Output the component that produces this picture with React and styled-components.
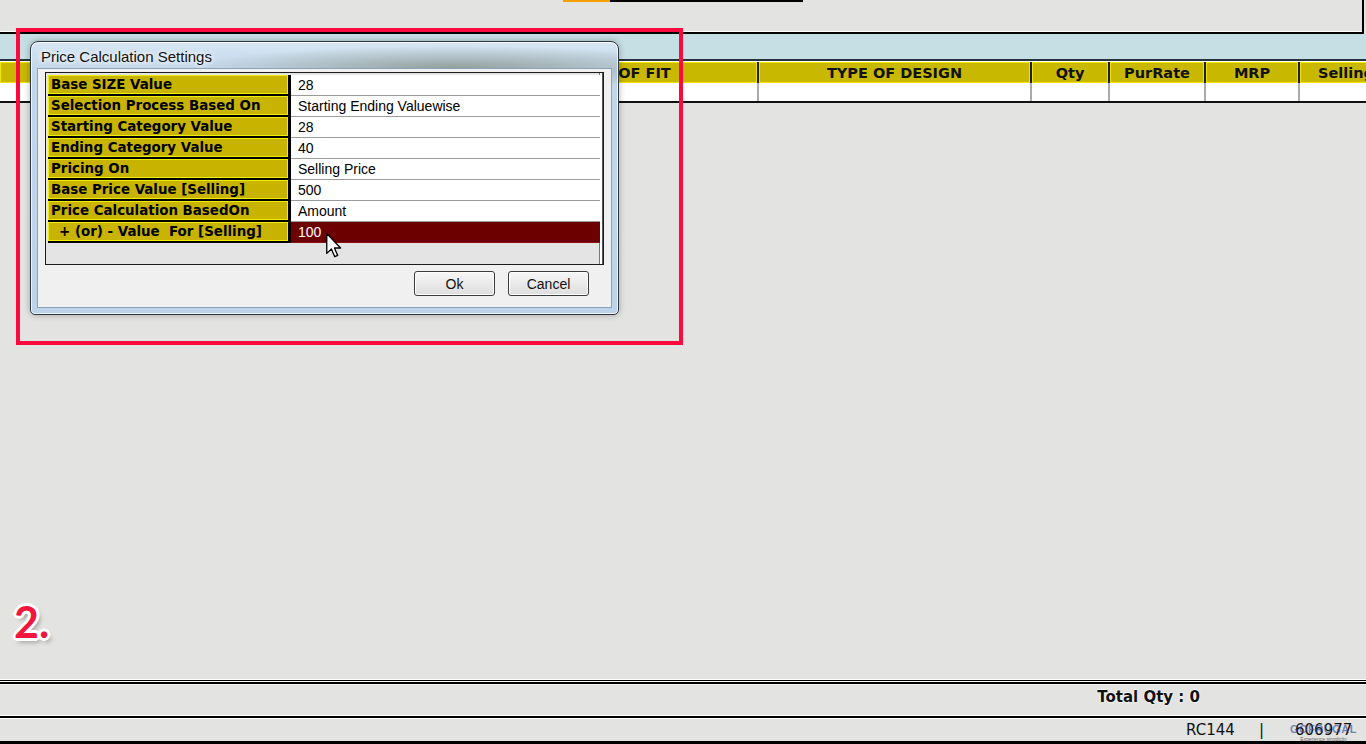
import React from 'react'
import styled, { createGlobalStyle } from 'styled-components'

const GlobalStyle = createGlobalStyle`
  html, body {
    margin: 0;
    padding: 0;
  }
  body {
    background: #e3e3e1;
    font-family: "DejaVu Sans", sans-serif;
    overflow: hidden;
  }
`;

const Page = styled.div`
  position: relative;
  width: 1366px;
  height: 744px;
  display: flex;
  flex-direction: column;
  overflow: hidden;
  background: #e3e3e1;
`;

const TopPanel = styled.div`
  height: 32px;
  margin-right: 2px;
  border-right: 2px solid #000;
  border-bottom: 2px solid #000;
  box-shadow: inset 0 -1px 0 #fff;
  display: flex;
  align-items: flex-start;
`;

const TabStub = styled.div`
  margin-left: 563px;
  display: flex;
  height: 2px;
`;

const TabPiece = styled.div`
  width: ${p => p.w}px;
  background: ${p => p.color};
`;

const BlueBand = styled.div`
  height: 25px;
  background: #c6dfe4;
  border-bottom: 2px solid #26343c;
`;

const GridRow = styled.div`
  display: grid;
  grid-template-columns: 200px 282px 271px 271px 76px 94px 92px 140px;
  column-gap: 2px;
  overflow: hidden;
`;

const HeaderRow = styled(GridRow)`
  height: 21px;
  background: #1e1e1e;
  border-top: 1px solid #fff;
`;

const HeaderCell = styled.div`
  background: #c9b800;
  border: 1px solid #f2e600;
  display: flex;
  align-items: center;
  justify-content: ${p => (p.align === 'start' ? 'flex-start' : 'center')};
  padding-left: ${p => (p.align === 'start' ? '17px' : '0')};
  font-weight: 700;
  font-size: 14.5px;
  color: #111;
  white-space: nowrap;
  overflow: hidden;
`;

const DataRow = styled(GridRow)`
  height: 18px;
  background: #ababab;
  border-bottom: 2px solid #111;
`;

const DataCell = styled.div`
  background: #fff;
`;

const Body = styled.div`
  flex: 1;
`;

const FooterRule = styled.div`
  height: 6px;
  background: linear-gradient(#fff 0 1px, #000 1px 2px, #fff 2px 3px, #000 3px 5px, #f4f4f4 5px 6px);
`;

const TotalBar = styled.div`
  height: 30px;
  box-sizing: border-box;
  display: flex;
  justify-content: flex-end;
  padding: 3px 166px 0 0;
  font-weight: 700;
  font-size: 15px;
  color: #111;
  text-shadow: 0 0 2px #fff, 0 0 2px #fff;
`;

const ThinRule = styled.div`
  height: 4px;
  background: linear-gradient(#fff 0 1px, #000 1px 3px, #fff 3px 4px);
`;

const StatusBar = styled.div`
  position: relative;
  height: 22px;
  display: grid;
  grid-template-columns: 73px 36px 1fr;
  align-items: center;
  padding-left: 1186px;
  font-size: 15px;
  color: #111;
`;

const Watermark = styled.div`
  position: absolute;
  left: 1290px;
  top: 5px;
  display: flex;
  flex-direction: column;
  align-items: center;
  line-height: 1;
  pointer-events: none;
`;

const WatermarkName = styled.span`
  font-family: "Liberation Sans", sans-serif;
  font-weight: 700;
  font-size: 11px;
  letter-spacing: 0.5px;
  color: rgba(40, 62, 150, 0.6);
`;

const WatermarkTag = styled.span`
  font-family: "Liberation Sans", sans-serif;
  font-size: 5px;
  color: #666;
  margin-top: 2px;
`;

const BottomEdge = styled.div`
  height: 3px;
  background: #000;
`;

const Dialog = styled.div`
  position: absolute;
  left: 30px;
  top: 41px;
  width: 589px;
  height: 274px;
  box-sizing: border-box;
  border: 1px solid #2c3845;
  border-radius: 8px 8px 5px 5px;
  padding: 0 6px 6px;
  display: flex;
  flex-direction: column;
  background:
    radial-gradient(ellipse 260px 22px at 72% 26px, rgba(105, 115, 92, 0.55), transparent),
    linear-gradient(180deg, #d6e6f3 0px, #c2d7ea 30px, #bcd3ea 100%);
  box-shadow: inset 0 0 0 1px rgba(255, 255, 255, 0.75), 0 0 6px rgba(0, 0, 0, 0.3);
`;

const TitleBar = styled.div`
  height: 26px;
  box-sizing: border-box;
  padding: 3px 0 0 4px;
  display: flex;
  align-items: center;
  font-family: "Liberation Sans", sans-serif;
  font-size: 15px;
  color: #111;
  text-shadow: 0 0 6px #fff, 0 0 4px #fff;
`;

const ClientArea = styled.div`
  flex: 1;
  background: #f0f0f0;
  border: 1px solid #8da2b8;
  padding: 3px 7px 0;
  display: flex;
  flex-direction: column;
`;

const GridBox = styled.div`
  height: 193px;
  box-sizing: border-box;
  border: 1px solid #1c1c1c;
  background: #e4e4e4;
  padding: 2px 0 0 2px;
  box-shadow: inset -1px 0 0 #555, inset -3px 0 0 #fff, inset -4px 0 0 #777;
`;

const SettingRow = styled.div`
  display: grid;
  grid-template-columns: 240px 309px;
  column-gap: 3px;
  width: 552px;
  height: 21px;
  background: #000;
`;

const Label = styled.div`
  height: 19px;
  box-sizing: border-box;
  background: #c8b400;
  border: 1px solid #eeee00;
  padding-left: ${p => (p.indent ? '10px' : '2px')};
  display: flex;
  align-items: center;
  font-weight: 700;
  font-size: 13.4px;
  color: #000;
  white-space: pre;
`;

const Value = styled.div`
  box-sizing: border-box;
  background: ${p => (p.active ? '#6c0000' : '#fff')};
  color: ${p => (p.active ? '#fff' : '#000')};
  border-bottom: 1px solid ${p => (p.active ? '#8a1010' : '#9b9b9b')};
  padding-left: 7px;
  display: flex;
  align-items: center;
  font-family: "Liberation Sans", sans-serif;
  font-size: 14px;
`;

const ButtonRow = styled.div`
  display: flex;
  justify-content: flex-end;
  gap: 13px;
  margin-top: 6px;
  padding-right: 15px;
`;

const Button = styled.button`
  width: 81px;
  height: 25px;
  border: 1px solid #3c3c3c;
  border-radius: 3px;
  background: linear-gradient(#f7f7f7, #dedede);
  box-shadow: inset 0 0 0 1px #fff;
  font-family: "Liberation Sans", sans-serif;
  font-size: 14px;
  color: #111;
  padding: 0;
`;

const Cursor = styled.svg`
  position: absolute;
  left: 326px;
  top: 233px;
  pointer-events: none;
`;

const Highlight = styled.div`
  position: absolute;
  left: 16px;
  top: 28px;
  width: 667px;
  height: 317px;
  box-sizing: border-box;
  border: 4px solid #fb0a3d;
  pointer-events: none;
`;

const StepMark = styled.div`
  position: absolute;
  left: 14px;
  top: 596px;
  font-family: Lato, "DejaVu Sans", sans-serif;
  font-weight: 700;
  font-size: 43px;
  color: #f2163e;
  text-shadow:
    -2px -2px 0 #fff, 2px -2px 0 #fff, -2px 2px 0 #fff, 2px 2px 0 #fff,
    0 -3px 0 #fff, 0 3px 0 #fff, -3px 0 0 #fff, 3px 0 0 #fff,
    3px 4px 5px rgba(0, 0, 0, 0.35);
`;

// the first two column titles sit under the dialog and are not visible
const columns = [
  { key: 'c1', label: '' },
  { key: 'c2', label: '' },
  { key: 'fit', label: 'TYPE OF FIT' },
  { key: 'design', label: 'TYPE OF DESIGN' },
  { key: 'qty', label: 'Qty' },
  { key: 'pur', label: 'PurRate' },
  { key: 'mrp', label: 'MRP' },
  { key: 'sell', label: 'Selling Price', align: 'start' },
];

const settings = [
  { label: 'Base SIZE Value', value: '28' },
  { label: 'Selection Process Based On', value: 'Starting Ending Valuewise' },
  { label: 'Starting Category Value', value: '28' },
  { label: 'Ending Category Value', value: '40' },
  { label: 'Pricing On', value: 'Selling Price' },
  { label: 'Base Price Value [Selling]', value: '500' },
  { label: 'Price Calculation BasedOn', value: 'Amount' },
  { label: '+ (or) - Value  For [Selling]', value: '100', indent: true, active: true },
];

const App = () => {
  return (
    <Page>
      <GlobalStyle />
      <TopPanel>
        <TabStub>
          <TabPiece w={47} color="#f5a000" />
          <TabPiece w={193} color="#000" />
        </TabStub>
      </TopPanel>
      <BlueBand />
      <HeaderRow>
        {columns.map(c => (
          <HeaderCell key={c.key} align={c.align}>{c.label}</HeaderCell>
        ))}
      </HeaderRow>
      <DataRow>
        {columns.map(c => <DataCell key={c.key} />)}
      </DataRow>
      <Body />
      <FooterRule />
      <TotalBar>Total Qty : 0</TotalBar>
      <ThinRule />
      <StatusBar>
        <span>RC144</span>
        <span>|</span>
        <span>606977</span>
        <Watermark>
          <WatermarkName>GOFRUGAL</WatermarkName>
          <WatermarkTag>Experience simplicity</WatermarkTag>
        </Watermark>
      </StatusBar>
      <BottomEdge />

      <Dialog>
        <TitleBar>Price Calculation Settings</TitleBar>
        <ClientArea>
          <GridBox>
            {settings.map(s => (
              <SettingRow key={s.label}>
                <Label indent={s.indent}>{s.label}</Label>
                <Value active={s.active}>{s.value}</Value>
              </SettingRow>
            ))}
          </GridBox>
          <ButtonRow>
            <Button>Ok</Button>
            <Button>Cancel</Button>
          </ButtonRow>
        </ClientArea>
      </Dialog>

      <Cursor width="16" height="25" viewBox="0 0 12 19">
        <path d="M0.5 0.5 L0.5 15.5 L4 12.2 L6.6 18 L8.8 17 L6.3 11.4 L11 11.4 Z" fill="#fff" stroke="#000" strokeWidth="1" strokeLinejoin="round" />
      </Cursor>

      <Highlight />
      <StepMark>2.</StepMark>
    </Page>
  )
}

export default App
